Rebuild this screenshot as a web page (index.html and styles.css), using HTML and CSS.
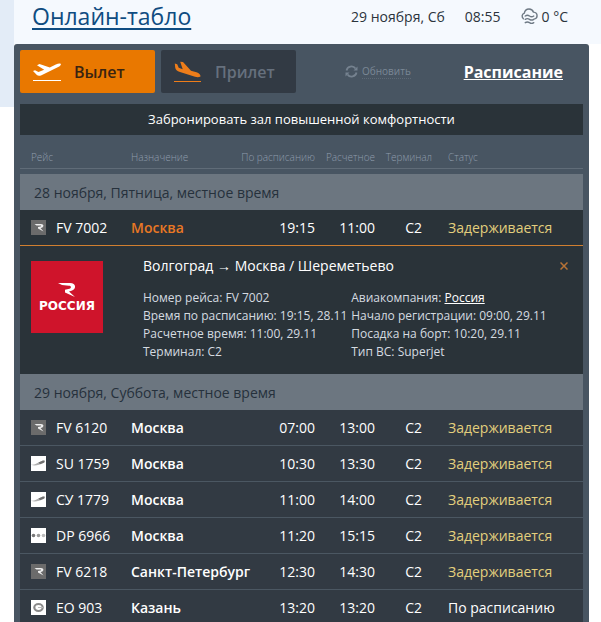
FILE: index.html
```html
<!DOCTYPE html>
<html lang="ru">
<head>
    <meta charset="UTF-8">
    <meta name="viewport" content="width=device-width, initial-scale=1.0">
    <title>Онлайн-табло</title>
    <link rel="stylesheet" href="styles.css">
</head>
<body>
    <!-- Логотипы авиакомпаний -->
    <svg class="sprite" aria-hidden="true">
        <symbol id="rossiya" viewBox="0 0 15 15">
            <rect width="15" height="15" fill="#6b6b6b"/>
            <path d="M3.500 4h6.500c3 0 3.200 3 .6 3.800L9.500 8.100l3 3.400L7 8.500V7l2.500-.4c.9-.3.800-1 0-1H5.500z" fill="#eee"/>
        </symbol>
        <symbol id="aeroflot" viewBox="0 0 15 15">
            <rect width="15" height="15" fill="#fff"/>
            <path d="M0 8.500c3 .6 5-.8 7.500-2L12 4.600l1.800.2-.6 2L8 8.700C5 9.700 2 9.800 0 8.500z" fill="#b0b0b0"/>
            <path d="M7.500 6.600L12 4.600l1.800.2-.6 1.800L9 8.200z" fill="#707070"/>
        </symbol>
        <symbol id="pobeda" viewBox="0 0 15 15">
            <rect width="15" height="15" fill="#fff"/>
            <circle cx="2.500" cy="7.500" r="1.800" fill="#777"/>
            <circle cx="7.500" cy="7.500" r="1.800" fill="#999"/>
            <circle cx="12.500" cy="7.500" r="1.800" fill="#bbb"/>
        </symbol>
        <symbol id="ikar" viewBox="0 0 15 15">
            <rect width="15" height="15" fill="#fff"/>
            <ellipse cx="7.500" cy="7.500" rx="4.200" ry="3.500" fill="none" stroke="#8a8a8a" stroke-width="2.200"/>
            <path d="M7 7.500h5" stroke="#bbb" stroke-width="1"/>
        </symbol>
    </svg>

    <div class="page">
        <header class="header">
            <h1><a href="#">Онлайн-табло</a></h1>
            <span class="date">29 ноября, Сб</span>
            <span class="time">08:55</span>
            <span class="weather">
                <svg width="17" height="17" viewBox="0 0 18 18" fill="none" stroke="#6f7a85" stroke-width="1.500" stroke-linecap="round">
                    <path d="M2.500 11.500C.5 9.500.8 6.500 3.500 5.500 4 2.500 6 1 8.500 1c2.400 0 4 1.300 4.700 3.400 2.500.2 3.800 2 3.800 3.800 0 1.800-1 3-2.500 3.300"/>
                    <path d="M4.500 8.500c1.500-1 3-1 4.500 0s3 1 4.500 0M4.500 12c1.500-1 3-1 4.500 0s3 1 4.500 0M4.500 15.500c1.500-1 3-1 4.500 0s3 1 4.500 0"/>
                </svg>
                0 °C
            </span>
        </header>

        <main class="board">
            <div class="toolbar">
                <button type="button" class="tab active">
                    <svg width="28" height="20" viewBox="0 0 28 20" fill="#fff">
                        <path d="M0 9l2-.8 3.500 1.900 5.700-2.300L4 3.200 6.500 2l10.300 3.400 6-2.800c2-1 4.400-1.300 5-.6.500.8-.8 2-2.600 3L8.500 13.300c-2 .8-3.600.7-4.600-.2z"/>
                        <rect y="18" width="28" height="1"/>
                    </svg>
                    Вылет
                </button>
                <button type="button" class="tab">
                    <svg width="28" height="22" viewBox="0 0 28 22" fill="#ee7d1a">
                        <path d="M.8 2.500l2.400.7 1.500 3.600 4 1.500L6.200.7 9 1l8 8.800 5.500 1.400c2.500.8 4.200 2.600 4 4.300-1.500.8-3.500.8-5.500.2L6 11C3 10 1.500 8.500 1.200 6.500z"/>
                        <rect y="20" width="27" height="1"/>
                    </svg>
                    Прилет
                </button>
                <button type="button" class="refresh">
                    <svg width="13" height="13" viewBox="0 0 13 13">
                        <path d="M1.500 5.500a5 5 0 0 1 9-2M11.500 7.500a5 5 0 0 1-9 2" fill="none" stroke="#75828f" stroke-width="1.800"/>
                        <path d="M12.500 1.500v4h-4zM.5 11.500v-4h4z" fill="#75828f"/>
                    </svg>
                    <span>Обновить</span>
                </button>
                <a href="#" class="schedule">Расписание</a>
            </div>

            <a href="#" class="banner">Забронировать зал повышенной комфортности</a>

            <table class="flights">
                <colgroup>
                    <col class="col-flight">
                    <col>
                    <col class="col-plan">
                    <col class="col-fact">
                    <col class="col-terminal">
                    <col class="col-status">
                </colgroup>
                <thead>
                    <tr>
                        <th>Рейс</th>
                        <th>Назначение</th>
                        <th class="num">По расписанию</th>
                        <th class="num">Расчетное</th>
                        <th class="num">Терминал</th>
                        <th class="status">Статус</th>
                    </tr>
                </thead>
                <tbody>
                    <tr class="spacer"><td colspan="6"></td></tr>
                    <tr class="day"><td colspan="6">28 ноября, Пятница, местное время</td></tr>
                    <tr class="flight opened">
                        <td><div class="code"><svg width="15" height="15"><use href="#rossiya"/></svg>FV 7002</div></td>
                        <td class="city">Москва</td>
                        <td class="num">19:15</td>
                        <td class="num">11:00</td>
                        <td class="terminal">C2</td>
                        <td class="status delayed">Задерживается</td>
                    </tr>
                    <tr class="details">
                        <td colspan="6">
                            <div class="details-box">
                                <svg class="airline-logo" width="72" height="72" viewBox="0 0 72 72">
                                    <rect width="72" height="72" fill="#cf142b"/>
                                    <path d="M27 22h12c6.500 0 6.500 6.500 1.500 7.700l-2.500.8 6 5.500-10-4.500v-2.700l4.500-1c2-.6 2-3-.5-3l-7-.8z" fill="#fff"/>
                                    <text x="36" y="49" text-anchor="middle" class="logo-text">РОССИЯ</text>
                                </svg>
                                <div class="info">
                                    <div class="info-head">
                                        <h2>Волгоград → Москва / Шереметьево</h2>
                                        <button type="button" class="close" aria-label="Закрыть">
                                            <svg width="8" height="8" viewBox="0 0 8 8"><path d="M.5.500l7 7M7.500.500l-7 7" stroke="#b87336" stroke-width="1.500"/></svg>
                                        </button>
                                    </div>
                                    <div class="info-cols">
                                        <ul>
                                            <li>Номер рейса: FV 7002</li>
                                            <li>Время по расписанию: 19:15, 28.11</li>
                                            <li>Расчетное время: 11:00, 29.11</li>
                                            <li>Терминал: C2</li>
                                        </ul>
                                        <ul>
                                            <li>Авиакомпания: <a href="#">Россия</a></li>
                                            <li>Начало регистрации: 09:00, 29.11</li>
                                            <li>Посадка на борт: 10:20, 29.11</li>
                                            <li>Тип ВС: Superjet</li>
                                        </ul>
                                    </div>
                                </div>
                            </div>
                        </td>
                    </tr>
                    <tr class="day"><td colspan="6">29 ноября, Суббота, местное время</td></tr>
                    <tr class="flight">
                        <td><div class="code"><svg width="15" height="15"><use href="#rossiya"/></svg>FV 6120</div></td>
                        <td class="city">Москва</td>
                        <td class="num">07:00</td>
                        <td class="num">13:00</td>
                        <td class="terminal">C2</td>
                        <td class="status delayed">Задерживается</td>
                    </tr>
                    <tr class="flight">
                        <td><div class="code"><svg width="15" height="15"><use href="#aeroflot"/></svg>SU 1759</div></td>
                        <td class="city">Москва</td>
                        <td class="num">10:30</td>
                        <td class="num">13:30</td>
                        <td class="terminal">C2</td>
                        <td class="status delayed">Задерживается</td>
                    </tr>
                    <tr class="flight">
                        <td><div class="code"><svg width="15" height="15"><use href="#aeroflot"/></svg>СУ 1779</div></td>
                        <td class="city">Москва</td>
                        <td class="num">11:00</td>
                        <td class="num">14:00</td>
                        <td class="terminal">C2</td>
                        <td class="status delayed">Задерживается</td>
                    </tr>
                    <tr class="flight">
                        <td><div class="code"><svg width="15" height="15"><use href="#pobeda"/></svg>DP 6966</div></td>
                        <td class="city">Москва</td>
                        <td class="num">11:20</td>
                        <td class="num">15:15</td>
                        <td class="terminal">C2</td>
                        <td class="status delayed">Задерживается</td>
                    </tr>
                    <tr class="flight">
                        <td><div class="code"><svg width="15" height="15"><use href="#rossiya"/></svg>FV 6218</div></td>
                        <td class="city">Санкт-Петербург</td>
                        <td class="num">12:30</td>
                        <td class="num">14:30</td>
                        <td class="terminal">C2</td>
                        <td class="status delayed">Задерживается</td>
                    </tr>
                    <tr class="flight">
                        <td><div class="code"><svg width="15" height="15"><use href="#ikar"/></svg>ЕО 903</div></td>
                        <td class="city">Казань</td>
                        <td class="num">13:20</td>
                        <td class="num">13:20</td>
                        <td class="terminal">C2</td>
                        <td class="status">По расписанию</td>
                    </tr>
                </tbody>
            </table>
        </main>
    </div>
</body>
</html>
```
FILE: styles.css
```css
* {
    box-sizing: border-box;
}

body {
    margin: 0;
    font-family: "Open Sans", sans-serif;
    font-size: 14px;
    color: #fff;
    background: linear-gradient(#e3ecf7, #e3ecf7) no-repeat 0 0 / 14px 107px #fff;
}

button {
    padding: 0;
    border: none;
    background: none;
    font-family: inherit;
    cursor: pointer;
}

.sprite {
    display: none;
}

.page {
    padding-left: 14px;
}

/* Шапка */
.header {
    display: flex;
    align-items: center;
    height: 44px;
    padding: 0 33px 12px 18px;
    background-color: #f5f9fe;
    color: #2b343c;
}

.header h1 {
    flex: 1;
    margin: 0;
    font-size: 23px;
    line-height: 32px;
    font-weight: 400;
}

.header h1 a {
    color: #0f4c81;
    text-decoration-thickness: 2px;
    text-underline-offset: 3px;
}

.time {
    margin: 0 20px;
}

.weather {
    display: flex;
    align-items: center;
    gap: 4px;
}

/* Табло */
.board {
    margin-right: 12px;
    padding: 6px;
    border-radius: 3px 3px 0 0;
    background-color: #485562;
}

.toolbar {
    display: flex;
    align-items: center;
    gap: 6px;
    padding-right: 20px;
}

.tab {
    display: flex;
    align-items: center;
    gap: 13px;
    width: 135px;
    height: 43px;
    padding-left: 13px;
    border-radius: 2px;
    background-color: #323a44;
    color: #66707d;
    font-size: 16px;
    font-weight: 600;
}

.tab.active {
    background-color: #e97800;
    color: #3a2410;
}

.refresh {
    display: flex;
    align-items: center;
    gap: 4px;
    margin-left: 43px;
    font-size: 10px;
    color: #7b8896;
}

.refresh span {
    border-bottom: 1px dotted #5d6975;
}

.schedule {
    margin-left: auto;
    color: #fff;
    font-size: 16px;
    font-weight: 700;
}

.banner {
    display: block;
    margin-top: 11px;
    background-color: #2a3339;
    color: #fff;
    font-size: 13px;
    line-height: 31px;
    text-align: center;
    text-decoration: none;
}

/* Таблица рейсов */
.flights {
    width: 100%;
    margin-top: 7px;
    table-layout: fixed;
    border-spacing: 0;
}

.col-flight {
    width: 111px;
}

.col-plan {
    width: 80px;
}

.col-fact {
    width: 60px;
}

.col-terminal {
    width: 57px;
}

.col-status {
    width: 151px;
}

.flights th,
.flights td {
    padding: 0;
    text-align: left;
    white-space: nowrap;
}

.flights th {
    height: 27px;
    padding-top: 3px;
    border-bottom: 1px solid #606c78;
    color: #8f9cac;
    font-size: 10px;
    font-weight: 300;
}

.flights th:first-child {
    padding-left: 11px;
}

.flights .num {
    text-align: right;
}

.flights .terminal {
    padding-right: 10px;
    text-align: right;
}

.flights .status {
    padding-left: 16px;
}

.flights .spacer td {
    height: 5px;
}

.flights .day td {
    height: 36px;
    padding-left: 14px;
    background-color: #6c7680;
    color: #26313c;
}

.flights .flight td {
    height: 36px;
    border-bottom: 1px solid #4b5762;
    background-color: #323a43;
}

.flights .flight.opened td {
    border-bottom-color: #d07f30;
    background-color: #2a3339;
}

.code {
    display: flex;
    align-items: center;
    gap: 10px;
    padding-left: 11px;
}

.city {
    font-weight: 600;
}

.opened .city {
    color: #e97824;
}

.flights .delayed {
    color: #e3cf7d;
}

/* Подробности рейса */
.details-box {
    display: flex;
    gap: 40px;
    padding: 10px 15px 13px 11px;
    background-color: #2a3339;
}

.airline-logo {
    flex: none;
    margin-top: 5px;
}

.logo-text {
    fill: #fff;
    font-family: "DejaVu Sans", sans-serif;
    font-size: 12px;
    font-weight: 700;
}

.info {
    flex: 1;
}

.info-head {
    display: flex;
    justify-content: space-between;
    align-items: center;
}

.info h2 {
    margin: 0;
    font-size: 14px;
    line-height: 20px;
    font-weight: 400;
}

.close svg {
    display: block;
}

.info-cols {
    display: grid;
    grid-template-columns: 49fr 51fr;
    margin-top: 13px;
}

.info ul {
    margin: 0;
    padding: 0;
    list-style: none;
    color: #d5dbe0;
    font-size: 12px;
    line-height: 18px;
}

.info a {
    color: #fff;
}
```
